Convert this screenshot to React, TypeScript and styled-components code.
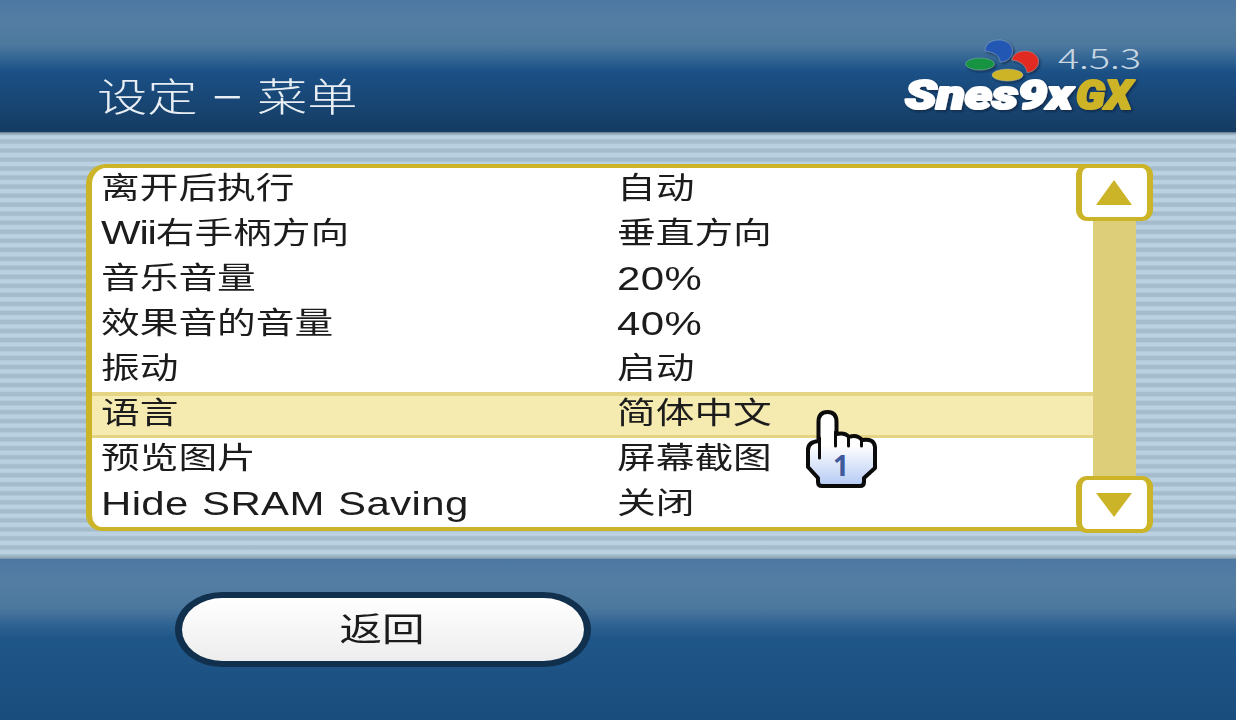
import React from "react";
import styled, { createGlobalStyle } from "styled-components";

const Global = createGlobalStyle`
  * { box-sizing: border-box; }
  body { margin: 0; overflow: hidden; font-family: "Liberation Sans", "Noto Sans CJK SC", sans-serif; }
`;
const Screen = styled.div`
  width: 1236px; height: 720px; display: flex; flex-direction: column; overflow: hidden;
  background: #b8d0e0;
`;
const Header = styled.header`
  height: 132px; display: flex; justify-content: space-between; padding: 36px 92px 0 97px;
  background: linear-gradient(#4d78a2 0, #547da3 20px, #4d799f 45px, #2c6090 62px, #1b5086 72px, #153c62 131px);
`;
const Title = styled.h1`
  margin: 31px 0 0; font-size: 39px; line-height: 54px; height: 54px; font-weight: 300; color: #e8eef3;
  font-family: "Noto Sans CJK SC", sans-serif; white-space: pre; transform: scaleX(1.29); transform-origin: 0 50%;
  display: flex;
`;
const Dash = styled.span`
  width: 46px; text-align: center; font-weight: 400; line-height: 49px; transform: scaleX(1.12);
`;
const Brand = styled.svg` width: 244px; height: 84px; display: block; `;
const Main = styled.main`
  height: 427px; padding: 32px 0 0 86px;
  background:
    linear-gradient(#5d7687 0, #9db4c4 2px, transparent 4px, transparent 423px, #8ea6b6 426px, #6d899f 427px),
    repeating-linear-gradient(#a5bccc 0, #a5bccc 2px, #b9d1e1 3.5px, #b9d1e1 6.5px, #a5bccc 8px, #a5bccc 9.02px);
`;
const Panel = styled.section` width: 1066px; height: 368px; display: flex; `;
const List = styled.div`
  width: 1007px; height: 367px; border: 4px solid #ccb428; border-left-width: 6px; border-right: 0;
  border-radius: 20px 0 0 16px; background: #fff; overflow: hidden;
`;
const Row = styled.div<{ $active?: boolean }>`
  height: ${(p) => (p.$active ? 46 : 45)}px; margin: ${(p) => (p.$active ? "-1px 0 0" : "0")};
  display: grid; grid-template-columns: 516px 1fr; padding-left: 9px; align-items: start;
  background: ${(p) => (p.$active ? "#f5eab0" : "transparent")};
  border: solid #e3d583; border-width: ${(p) => (p.$active ? "4px 0 3px" : "0")};
`;
const Label = styled.span<{ $lift?: boolean }>`
  font-size: 30px; line-height: 40px; height: 40px; color: #1c1c1c; white-space: pre;
  margin-top: ${(p) => (p.$lift ? -3 : 0)}px;
  transform: scaleX(1.29); transform-origin: 0 50%; justify-self: start; font-weight: 400;
`;
const Latin = styled.span<{ $tight?: boolean }>`
  font-size: 32.5px; line-height: 1; word-spacing: 1px; vertical-align: ${(p) => (p.$tight ? -1 : -2)}px;
  letter-spacing: ${(p) => (p.$tight ? -0.9 : 0.3)}px;
`;
const Scroll = styled.aside`
  width: 76px; height: 369px; margin-left: -17px; display: flex; flex-direction: column; align-items: center;
`;
const Arrow = styled.button`
  width: 77px; height: 57px; padding: 0; border: solid #ccb428; border-width: 4px 6px; border-radius: 11px;
  background: #fff; display: flex; align-items: center; justify-content: center; flex: none;
`;
const Track = styled.div` width: 43px; flex: 1; background: #ddcf79; `;
const Footer = styled.footer`
  height: 161px; padding: 33px 0 0 175px;
  background: linear-gradient(#4d78a2 0, #547da3 22px, #4d799f 48px, #2c6090 68px, #1f5688 80px, #194d7e 160px);
`;
const Back = styled.button`
  width: 416px; height: 75px; padding: 0 3px 5px 0; border: solid #11304d; border-width: 6px 7px; border-radius: 48px / 38px;
  background: linear-gradient(#fff, #ededed); display: flex; align-items: center; justify-content: center;
`;
const BackText = styled.span`
  font: 400 33px/44px "Noto Sans CJK SC", sans-serif; color: #1c1c1c; transform: scaleX(1.29);
`;
const Pointer = styled.svg` position: absolute; left: 803px; top: 407px; width: 76px; height: 84px; `;

const rows: [string, string][] = [
  ["离开后执行", "自动"],
  ["Wii右手柄方向", "垂直方向"],
  ["音乐音量", "20%"],
  ["效果音的音量", "40%"],
  ["振动", "启动"],
  ["语言", "简体中文"],
  ["预览图片", "屏幕截图"],
  ["Hide SRAM Saving", "关闭"],
];

// Latin runs are set slightly larger than the Chinese characters beside them.
const mixed = (text: string) => {
  const latin = text.match(/^[\x00-\x7f]+/)?.[0] ?? "";
  return (
    <>
      {latin && <Latin $tight={latin.length < text.length}>{latin}</Latin>}
      {text.slice(latin.length)}
    </>
  );
};

const Logo = () => (
  <Brand viewBox="900 36 244 84">
    <defs>
      <filter id="bevel" x="-10%" y="-20%" width="120%" height="150%">
        <feDropShadow dx="1.5" dy="1.5" stdDeviation="1" floodColor="#0a1f35" floodOpacity=".7" />
      </filter>
    </defs>
    <g filter="url(#bevel)" strokeWidth="1" stroke="#b8c8d8" strokeOpacity=".35">
      <path d="M985 51C985 44 991 40 999 40C1007 40 1012.500 45 1012.500 51C1012.500 57 1008 62 1000 62C1000 55 993 52 985 51Z" fill="#2458b4" />
      <path d="M1012 60C1013 54 1019 51 1025 51C1033 51 1038.500 56 1038.500 61C1038.500 67 1034 72 1027 72.500C1026 65 1020 61 1012 60Z" fill="#e02a20" />
      <ellipse cx="980" cy="64" rx="14.5" ry="6" fill="#149442" />
      <ellipse cx="1007.500" cy="75" rx="15.5" ry="6" fill="#ccb428" />
    </g>
    <g filter="url(#bevel)" fontFamily="Roboto, sans-serif" fontSize="40" fontWeight="900" fontStyle="italic" strokeWidth="2.2" strokeLinejoin="round">
      <text x="905" y="108.500" textLength="168" lengthAdjust="spacingAndGlyphs" fill="#fff" stroke="#fff">Snes9x</text>
      <text x="1076" y="108.500" textLength="56" lengthAdjust="spacingAndGlyphs" fill="#ccb428" stroke="#ccb428">GX</text>
    </g>
    <text x="1058" y="69" textLength="83" lengthAdjust="spacingAndGlyphs" fontFamily="Noto Sans CJK SC, sans-serif" fontWeight="300" fontSize="28.500" fill="#c8d6e2">4.5.3</text>
  </Brand>
);

const Hand = () => (
  <Pointer viewBox="803 407 76 84">
    <defs>
      <linearGradient id="hand" x1="0" y1="0" x2="0" y2="1">
        <stop offset=".45" stopColor="#fff" /><stop offset="1" stopColor="#b4c9f4" />
      </linearGradient>
    </defs>
    <path d="M818.500 441V422Q818.500 412 827.500 412T836.500 422V434Q845 432 849 437Q857 434 862 440Q874 438 875 447V468L864 478V482Q864 486 860 486H822Q818 486 818 482V478L808 467V450Q808 442 818.500 441Z" fill="url(#hand)" stroke="#0b0b0b" strokeWidth="4" strokeLinejoin="round" />
    <path d="M819.500 438V458M835.500 432V446M848.500 437V446M861.500 439V446" stroke="#0b0b0b" strokeWidth="3" strokeLinecap="round" fill="none" />
    <text x="841" y="475.500" textAnchor="middle" fontFamily="Open Sans, sans-serif" fontWeight="700" fontSize="28" fill="#405b9c">1</text>
  </Pointer>
);

export default function App() {
  return (
    <Screen>
      <Global />
      <Header>
        <Title>设定<Dash>–</Dash>菜单</Title>
        <Logo />
      </Header>
      <Main>
        <Panel>
          <List>
            {rows.map(([name, value]) => {
              const active = name === "语言";
              return (
                <Row key={name} $active={active}>
                  <Label $lift={active}>{mixed(name)}</Label>
                  <Label $lift={active}>{mixed(value)}</Label>
                </Row>
              );
            })}
          </List>
          <Scroll>
            <Arrow><svg width="38" height="26"><path d="M19 0L37 25H1Z" fill="#ccb428" /></svg></Arrow>
            <Track />
            <Arrow><svg width="38" height="26"><path d="M19 25L37 1H1Z" fill="#ccb428" /></svg></Arrow>
          </Scroll>
        </Panel>
      </Main>
      <Footer><Back><BackText>返回</BackText></Back></Footer>
      <Hand />
    </Screen>
  );
}
